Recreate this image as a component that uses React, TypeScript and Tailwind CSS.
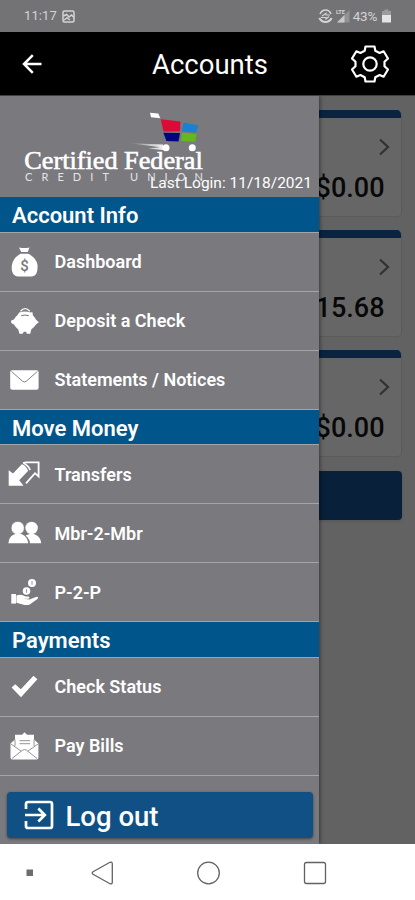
import React from 'react';

const DashboardIcon = () => (
    <svg width="28" height="30" viewBox="0 0 28 30">
        <path d="M8 0.5 Q13.5 1.5 18.5 0.5 L16.8 5 H10.2 Z" fill="#fff" />
        <path d="M9.6 6.8 H17.4 C22 9 26.6 14 26.6 19.5 C26.6 26 24.5 29.5 20.5 29.5 H7 C3 29.5 0.7 26 0.7 20.5 C0.7 14 5 9 9.6 6.8 Z" fill="#fff" />
        <text x="13.5" y="23.6" textAnchor="middle" fontSize="15" fontWeight="500" fill="#77777b" fontFamily="Roboto, sans-serif">$</text>
    </svg>
);

const PiggyIcon = () => (
    <svg width="28" height="28" viewBox="0 0 28 28">
        <path d="M9.5 4.2 Q14 -0.8 18.8 4.2" fill="none" stroke="#fff" strokeWidth="1.3" />
        <path d="M8.2 5.6 Q14 3.4 19.6 5.6 L21.3 5 L22 8.6 Q24 10.6 25 12.8 L27.9 15.2 L25 17.6 Q23 20.7 20.2 22.5 L19.3 26.8 H15.9 L15 24.8 H12.7 L11.7 26.8 H8.4 L7.3 22.5 Q4.5 20.5 3 17.6 L0.2 16 V13.6 L3 12.4 Q4.5 9.6 6.2 8.4 Z" fill="#fff" />
        <path d="M10.2 8.7 Q14 7.4 17.8 8.7" fill="none" stroke="#77777b" strokeWidth="1" />
    </svg>
);

const MailIcon = () => (
    <svg width="29" height="20" viewBox="0 0 29 20">
        <rect x="0.2" y="0.2" width="28.4" height="19.6" rx="2" fill="#fff" />
        <path d="M1.5 1.5 L12.5 11.2 Q14.4 12.8 16.3 11.2 L27.3 1.5" fill="none" stroke="#85858a" strokeWidth="1" />
    </svg>
);

const TransferIcon = () => (
    <svg width="33" height="26" viewBox="0 0 33 26">
        <path d="M0.7 9.3 L5 12.5 L13.8 3.3 Q17 3.3 20.2 9.8 L11.2 19.2 L15.5 24.8 H0.7 Z" fill="#fff" />
        <path d="M15 2.2 L18 1.3 H30.6 V15.5 L27 12.2 L18 22.3" fill="none" stroke="#fff" strokeWidth="1.8" />
        <path d="M16 2.2 L20.2 5.5 L22.2 9" fill="none" stroke="#fff" strokeWidth="1.6" />
    </svg>
);

const MembersIcon = () => (
    <svg width="34" height="24" viewBox="0 0 34 24">
        <circle cx="23.6" cy="7" r="6.2" fill="#fff" />
        <path d="M17.5 14.6 Q24 10.8 29 14.4 Q32.8 17 33.2 22.3 H22 Q21.8 18 17.5 14.6 Z" fill="#fff" />
        <circle cx="9.7" cy="7" r="6.7" fill="#fff" stroke="#77777b" strokeWidth="0.8" />
        <path d="M0.4 22.3 Q0.8 15.5 6 13.5 Q10 11.6 14.5 13.6 Q19.5 16 20.3 22.3 Z" fill="#fff" />
    </svg>
);

const PayPersonIcon = () => (
    <svg width="28" height="28" viewBox="0 0 28 28">
        <circle cx="21" cy="5" r="4" fill="#fff" />
        <circle cx="15.5" cy="13" r="3.8" fill="#fff" />
        <path d="M21 3.2 V6.8 M15.5 11.2 V14.8" stroke="#98989c" strokeWidth="1" />
        <path d="M0.3 16 H5 V25.6 H0.3 Z" fill="#fff" />
        <path d="M5.4 17.4 Q10.5 15.5 14.5 18.5 H17.4 Q19.4 19.5 17.7 20.8 H12.5 L18.5 21.6 L25.6 18.8 Q28.3 19 26.4 21 L18.8 26.5 Q15.5 27.5 11.8 26.5 L5.4 24.8 Z" fill="#fff" />
    </svg>
);

const CheckIcon = () => (
    <svg width="27" height="23" viewBox="0 0 27 23">
        <path d="M0.6 12.6 L4.2 9.2 L9.8 14.3 L22.5 0.8 L26.4 4.3 L10 22.2 Z" fill="#fff" />
    </svg>
);

const BillsIcon = () => (
    <svg width="29" height="28" viewBox="0 0 29 28">
        <path d="M0.5 11.5 L5 7.6 V2.8 H12 L14.5 0.3 L17 2.8 H24 V7.6 L28.4 11.5 V25.5 Q28.4 27.5 26.5 27.5 H2.3 Q0.5 27.5 0.5 25.5 Z" fill="#fff" />
        <path d="M1 12 L11.2 19.2 M28 12 L17.8 19.2 M2 26.5 L12.5 18.2 Q14.5 17 16.5 18.2 L27 26.5 M9.5 8.7 H20 M9.5 11.7 H20 M5 7.6 V14 M24 7.6 V14" fill="none" stroke="#88888c" strokeWidth="0.9" />
    </svg>
);

const sections = [
    {
        title: 'Account Info',
        items: [
            { label: 'Dashboard', icon: <DashboardIcon /> },
            { label: 'Deposit a Check', icon: <PiggyIcon /> },
            { label: 'Statements / Notices', icon: <MailIcon /> },
        ],
    },
    {
        title: 'Move Money',
        items: [
            { label: 'Transfers', icon: <TransferIcon /> },
            { label: 'Mbr-2-Mbr', icon: <MembersIcon /> },
            { label: 'P-2-P', icon: <PayPersonIcon /> },
        ],
    },
    {
        title: 'Payments',
        items: [
            { label: 'Check Status', icon: <CheckIcon /> },
            { label: 'Pay Bills', icon: <BillsIcon /> },
        ],
    },
];

const balances = ['$0.00', '$15.68', '$0.00'];

const StatusBar = () => (
    <div className="h-8 shrink-0 bg-[#737375] flex items-center justify-between pl-6 pr-6 text-[#d4d4d6] text-[13px]">
        <div className="flex items-center gap-[5px]">
            <span className="tracking-[0.1px]">11:17</span>
            <svg width="13" height="13" viewBox="0 0 13 13" fill="none" stroke="#d4d4d6" strokeWidth="1.5">
                <rect x="1" y="1" width="11" height="11" rx="1.5" />
                <path d="M1.5 6 L4.5 4.5 L7 7 L9.5 5 L12 7.5 M2 10 L5 8 L8 10" />
            </svg>
        </div>
        <div className="flex items-center">
            <svg width="15" height="14" viewBox="0 0 15 14" fill="none" stroke="#d4d4d6">
                <path d="M2 5 Q4 1 7.5 1 Q11.5 1 13 5" strokeWidth="1.6" />
                <path d="M1.3 9 Q3.5 13 7.5 13 Q11.5 13 13.7 9" strokeWidth="2" />
                <path d="M4 7 L8 4.2 V6 H12 M11 7.5 L8 10 V8.5 H3" strokeWidth="1.1" />
            </svg>
            <svg className="ml-[3px]" width="14" height="14" viewBox="0 0 14 14">
                <path d="M1 13.5 L13.5 1 V13.5 Z" fill="#929294" />
                <path d="M1 13.5 L8.5 6 V13.5 Z" fill="#c8c8ca" />
                <text x="0" y="5.2" fontSize="5.5" fontWeight="700" fill="#d4d4d6" fontFamily="Roboto, sans-serif">LTE</text>
            </svg>
            <span className="ml-[3px] text-[13.5px] tracking-[-0.3px]">43%</span>
            <svg className="ml-[5px]" width="9" height="14" viewBox="0 0 9 14">
                <path d="M2.5 0.5 H6.5 V2 H9 V6 H0 V2 H2.5 Z" fill="#9c9c9e" />
                <path d="M0 6 H9 V13.5 H0 Z" fill="#e4e4e6" />
            </svg>
        </div>
    </div>
);

const Header = () => (
    <div className="h-16 shrink-0 bg-black text-white flex items-center justify-between pl-[22px] pr-[26px] border-b border-[#3f3f42]">
        <svg width="20" height="20" viewBox="0 0 20 20" fill="none" stroke="#fff" strokeWidth="2.5">
            <path d="M19.5 10 H2 M10.8 1.2 L2 10 L10.8 18.8" />
        </svg>
        <h1 className="text-[27.5px] leading-8 font-normal ml-[27px] mt-[3px]">Accounts</h1>
        <svg width="38" height="38" viewBox="0 0 38 38" fill="none" stroke="#fff" strokeWidth="2.2">
            <circle cx="19" cy="19" r="6.7" />
            <path d="M14.5 1.5 H23.5 L24.3 5.8 L28.6 8 L32.6 6.3 L37 13.5 L33.5 16.7 V21.3 L37 24.5 L32.6 31.7 L28.6 30 L24.3 32.2 L23.5 36.5 H14.5 L13.7 32.2 L9.4 30 L5.4 31.7 L1 24.5 L4.5 21.3 V16.7 L1 13.5 L5.4 6.3 L9.4 8 L13.7 5.8 Z" strokeLinejoin="round" />
        </svg>
    </div>
);

const AccountCard = ({ balance }: { balance: string }) => (
    <div className="h-[107px] rounded-[5px] border border-[#5b5b5b] border-t-0 bg-[#666666] overflow-hidden">
        <div className="h-2 bg-[#082441]" />
        <div className="flex flex-col items-end pr-[10px] pt-[20px]">
            <svg width="13" height="18" viewBox="0 0 13 18" fill="none" stroke="#323232" strokeWidth="2.3">
                <path d="M2 1.5 L10 9 L2 16.5" />
            </svg>
            <span className="text-[27px] leading-8 font-medium text-[#080808] mt-[16px] mr-[6px]">{balance}</span>
        </div>
    </div>
);

const Logo = () => (
    <svg width="220" height="90" viewBox="0 0 220 90" fill="#fff">
        <defs>
            <linearGradient id="speed" x1="0" x2="1">
                <stop offset="0" stopColor="#fff" stopOpacity="0.1" />
                <stop offset="1" stopColor="#fff" stopOpacity="0.9" />
            </linearGradient>
        </defs>
        <path d="M150 16.8 L158.3 17.6 L160.3 22.3 L151 21.2 Z" />
        <path d="M160.8 23.3 L180.5 25.6 L180 35.2 L163.5 35.6 Z" fill="#dc0b35" />
        <path d="M183.5 26.6 L198.4 29.4 L196 36.6 L182 35.2 Z" fill="#1683d2" />
        <path d="M163.4 36.8 L180 37 L178.5 45.6 L166.4 45 Z" fill="#02067c" />
        <path d="M182 36.8 L196.4 38 L195.3 45.8 L181 45 Z" fill="#65b81c" />
        <path d="M130 47.2 L163 48.6 V54 L148 52.4 L160 51.2 Z" fill="url(#speed)" />
        <circle cx="166" cy="51.7" r="3.5" />
        <circle cx="192.3" cy="51.7" r="3.5" />
        <text x="24.3" y="73" fontSize="25" stroke="#fff" strokeWidth="0.6" textLength="178.5" lengthAdjust="spacingAndGlyphs" fontFamily="'Liberation Serif', serif">Certified Federal</text>
        <g fontSize="11" fontFamily="Lato, sans-serif" fill="#e4e4e6">
            <text x="25" y="85" textLength="84">CREDIT</text>
            <text x="130" y="85" textLength="73">UNION</text>
        </g>
    </svg>
);

const Drawer = () => (
    <div className="absolute inset-y-0 left-0 w-[319px] bg-[#7a797e] flex flex-col text-white shadow-[1px_0_4px_rgba(0,0,0,0.45)]">
        <div className="h-[101px] shrink-0">
            <Logo />
            <p className="text-right text-[15.5px] leading-4 pr-[7px] -mt-[11px]">Last Login: 11/18/2021</p>
        </div>
        {sections.map((section) => (
            <div key={section.title} className="shrink-0">
                <h2 className="h-[35.5px] bg-[#00558a] border-b border-[#a3a4aa] pl-3 text-[22px] leading-[37px] font-semibold">{section.title}</h2>
                {section.items.map((item) => (
                    <div key={item.label} className="h-[59px] border-b border-[#a3a3a8] flex items-center">
                        <div className="w-[49px] shrink-0 flex justify-center">{item.icon}</div>
                        <span className="pl-[5.5px] text-[18px] font-semibold">{item.label}</span>
                    </div>
                ))}
            </div>
        ))}
        <button className="mt-[16px] mx-[6.5px] h-[46px] shrink-0 rounded-[4px] bg-[#105084] flex items-center pl-[17px] shadow-[0_1px_3px_rgba(0,0,0,0.45)]">
            <svg width="30" height="30" viewBox="0 0 30 30" fill="none" stroke="#fff" strokeWidth="2.7">
                <path d="M2 9 V4 Q2 2 4 2 H26 Q28 2 28 4 V26 Q28 28 26 28 H4 Q2 28 2 26 V21" />
                <path d="M1 15 H20 M14.3 8.5 L20.8 15 L14.3 21.5" />
            </svg>
            <span className="ml-[12px] mt-[4px] text-[27.5px] leading-8 font-medium">Log out</span>
        </button>
    </div>
);

const NavBar = () => (
    <div className="h-[56px] shrink-0 bg-white flex items-center pt-[2px]">
        <svg width="415" height="30" viewBox="0 0 415 30" fill="none" stroke="#626262" strokeWidth="1.3">
            <rect x="26.5" y="11.5" width="6.5" height="6.5" fill="#6d6d6d" stroke="none" />
            <path d="M93 13.8 L110 4.3 Q112.3 3.3 112.3 6 V24 Q112.3 26.7 110 25.7 L93 16.2 Q91.5 15 93 13.8 Z" />
            <circle cx="208.5" cy="15" r="10.8" />
            <rect x="304.5" y="4.5" width="21" height="21" rx="2" />
        </svg>
    </div>
);

const App = () => {
    return (
        <div className="w-full h-screen flex flex-col overflow-hidden font-['Roboto',sans-serif]">
            <StatusBar />
            <Header />
            <div className="relative flex-1 bg-[#626262] overflow-hidden">
                <div className="flex flex-col gap-[13.2px] px-[13.5px] pt-[14px]">
                    {balances.map((balance, i) => (
                        <AccountCard key={i} balance={balance} />
                    ))}
                    <div className="h-[49px] rounded-[4px] bg-[#082039] shadow" />
                </div>
                <Drawer />
            </div>
            <NavBar />
        </div>
    );
};

export default App;
